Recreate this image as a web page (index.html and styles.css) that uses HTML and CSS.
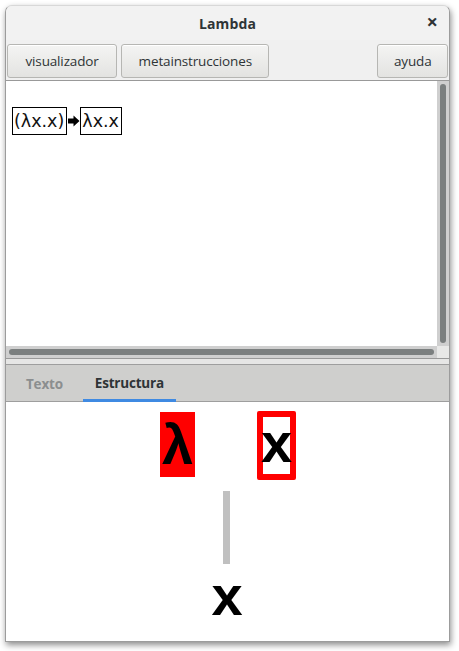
FILE: index.html
```html
<!DOCTYPE html>
<html lang="es">
<head>
<meta charset="utf-8">
<title>Lambda</title>
<link rel="stylesheet" href="styles.css">
</head>
<body>
<div class="window">
  <header class="titlebar">
    <span class="title">Lambda</span>
    <span class="close">×</span>
  </header>
  <nav class="toolbar">
    <button class="btn btn-vis">visualizador</button>
    <button class="btn btn-meta">metainstrucciones</button>
    <span class="spacer"></span>
    <button class="btn btn-help">ayuda</button>
  </nav>
  <section class="canvas">
    <div class="canvas-body">
      <div class="expr">
        <span class="term">(λx.x)</span>
        <svg class="arrow" width="12" height="12" viewBox="0 0 12 12"><path d="M0 3.5H5.5V0.5L11.5 6L5.5 11.5V8.5H0Z" fill="#000"/></svg>
        <span class="term">λx.x</span>
      </div>
      <div class="vscroll"><div class="vthumb"></div></div>
    </div>
    <div class="hscroll-row">
      <div class="hscroll"><div class="hthumb"></div></div>
      <div class="corner"></div>
    </div>
  </section>
  <div class="sep"></div>
  <div class="tabs">
    <span class="tab">Texto</span>
    <span class="tab active">Estructura</span>
  </div>
  <section class="tree">
    <div class="node lam">λ</div>
    <div class="node var-box">x</div>
    <div class="edge"></div>
    <div class="node var">x</div>
  </section>
</div>
</body>
</html>
```
FILE: styles.css
```css
* { box-sizing: border-box; }
html, body { margin: 0; padding: 0; background: #ffffff; }
body { width: 459px; height: 651px; overflow: hidden; }

.window {
  margin: 5px 0 0 5px;
  width: 445px;
  height: 637px;
  border: 1px solid #9c9c9c;
  border-top-color: #d8d8d8;
  border-radius: 7px 7px 0 0;
  background: #f0f0f0;
  box-shadow: 1px 3px 6px rgba(0,0,0,0.45);
  display: flex;
  flex-direction: column;
  font-family: "Open Sans", "Noto Sans", sans-serif;
  overflow: hidden;
}

.titlebar {
  height: 34px;
  flex: none;
  display: flex;
  align-items: center;
  justify-content: center;
  position: relative;
  background: #f2f2f2;
}
.title {
  font-weight: 700;
  font-size: 14px;
  color: #2e3436;
  letter-spacing: 0.1px;
}
.close {
  position: absolute;
  right: 11px;
  top: 6px;
  font-size: 20px;
  font-weight: 700;
  color: #2e3436;
  line-height: 20px;
}

.toolbar {
  height: 40px;
  flex: none;
  display: flex;
  align-items: flex-start;
  gap: 4px;
  padding: 4px 1px 0 1px;
  background: #f0f0f0;
}
.spacer { flex: 1; }
.btn {
  height: 34px;
  padding: 0 15px;
  border: 1px solid #b6b6b3;
  border-radius: 3px;
  background: linear-gradient(#f4f4f3, #e3e3e1);
  font-family: inherit;
  font-size: 13.5px;
  letter-spacing: -0.15px;
  color: #2e3436;
  box-shadow: inset 0 1px #ffffff;
}
.btn-vis { padding: 0 17.5px; }
.btn-meta { padding: 0 16.5px; }
.btn-help { padding: 0 15.5px; }

.canvas {
  flex: none;
  height: 279px;
  display: flex;
  flex-direction: column;
  background: #ffffff;
  border-top: 1px solid #999;
  border-bottom: 1px solid #999;
}
.canvas-body {
  flex: 1;
  display: flex;
}
.expr {
  flex: 1;
  display: flex;
  align-items: center;
  align-self: flex-start;
  margin: 26px 0 0 6px;
  font-family: "DejaVu Sans", sans-serif;
  font-size: 17.5px;
  color: #111;
}
.term {
  border: 1px solid #000;
  height: 28px;
  line-height: 26px;
  padding: 0 2px 0 1px;
  background: #fff;
}
.arrow { margin: 0 0 0 1px; }

.vscroll {
  width: 12px;
  background: #cfcfcf;
  padding: 3px;
  display: flex;
}
.vthumb {
  flex: 1;
  background: #7b7f7f;
  border-radius: 3px;
}
.hscroll-row {
  height: 12px;
  display: flex;
}
.hscroll {
  flex: 1;
  background: #cfcfcf;
  padding: 3px;
  display: flex;
}
.hthumb {
  flex: 1;
  background: #7b7f7f;
  border-radius: 3px;
}
.corner {
  width: 12px;
  background: #e8e8e7;
}

.sep {
  height: 5px;
  flex: none;
  background: #e6e6e5;
}

.tabs {
  height: 38px;
  flex: none;
  background: #cfcfcd;
  border-top: 1px solid #9e9e9e;
  border-bottom: 1px solid #9e9e9e;
  display: flex;
  align-items: stretch;
  padding-left: 8px;
}
.tab {
  display: flex;
  align-items: center;
  padding: 2px 12px 0;
  font-size: 13.5px;
  font-weight: 700;
  letter-spacing: -0.2px;
  color: #8b8e8f;
  border-bottom: 2px solid transparent;
  margin-bottom: -1px;
}
.tab + .tab { margin-left: 8px; }
.tab.active {
  color: #2e3436;
  border-bottom: 3px solid #3f8ae2;
}

.tree {
  flex: 1;
  position: relative;
  background: #ffffff;
  font-family: "Liberation Sans", Arial, sans-serif;
  font-weight: 700;
  font-size: 56px;
  color: #000;
}
.node {
  position: absolute;
  line-height: 65px;
  text-align: center;
}
.lam {
  left: 154px;
  top: 10px;
  width: 35px;
  height: 65px;
  background: #ff0000;
}
.var-box {
  left: 251px;
  top: 9px;
  width: 39px;
  height: 69px;
  border: 6px solid #ff0000;
  border-radius: 2px;
  display: flex;
  align-items: flex-end;
  justify-content: center;
  line-height: 1;
  padding-bottom: 3px;
}
.edge {
  position: absolute;
  left: 217px;
  top: 89px;
  width: 7px;
  height: 73px;
  background: #c0c0c0;
}
.var {
  left: 191px;
  top: 161px;
  width: 60px;
  height: 65px;
}
```
